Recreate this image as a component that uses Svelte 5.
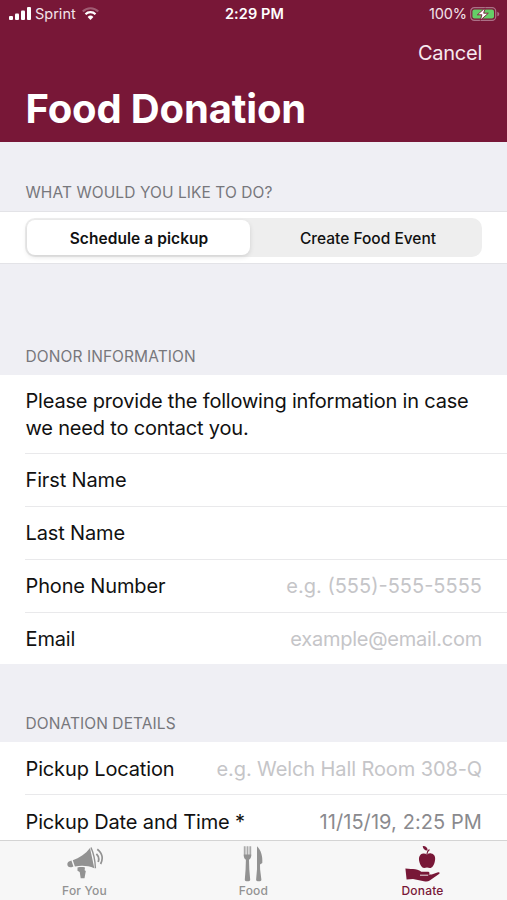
<script>
	let action = 'pickup'
	let tab = 'donate'

	const actions = [
		{ id: 'pickup', label: 'Schedule a pickup' },
		{ id: 'event', label: 'Create Food Event' }
	]

	const donor = [
		{ label: 'First Name', hint: '' },
		{ label: 'Last Name', hint: '' },
		{ label: 'Phone Number', hint: 'e.g. (555)-555-5555', cls: 'phone' },
		{ label: 'Email', hint: 'example@email.com', cls: 'email' }
	]
</script>

<div class="screen">
	<header>
		<div class="status">
			<div class="carrier">
				<svg width="22" height="13" viewBox="0 0 22 13" fill="#fff">
					<rect x="0" y="9" width="4" height="4" rx="1" />
					<rect x="6" y="6.5" width="4" height="6.5" rx="1" />
					<rect x="12" y="3.5" width="4" height="9.5" rx="1" />
					<rect x="18" y="0" width="4" height="13" rx="1" />
				</svg>
				<span>Sprint</span>
				<svg width="17" height="13" viewBox="0 0 17 13" fill="none" stroke="#fff" stroke-width="2.2">
					<path d="M.8 4.5a10.8 10.8 0 0 1 15.4 0" opacity=".3" />
					<path d="M3.5 7.3a7 7 0 0 1 10 0" />
					<path d="M8.5 13 5.6 10a4.1 4.1 0 0 1 5.8 0z" fill="#fff" stroke="none" />
				</svg>
			</div>
			<div class="time">2:29 PM</div>
			<div class="power">
				<span>100%</span>
				<svg width="30" height="14" viewBox="0 0 30 14">
					<rect x=".7" y=".7" width="25" height="12.6" rx="3.6" fill="none" stroke="#ac7187" stroke-width="1.2" />
					<path d="M27.3 4.7c2.6.8 2.6 3.8 0 4.6z" fill="#ac7187" />
					<rect x="2.4" y="2.4" width="21.6" height="9.2" rx="2" fill="#65cf67" />
					<path d="M15.2 .8 7.4 7.8h4.5l-1.6 5.5 8-7.1h-4.6z" fill="#fff" stroke="#781737" stroke-width=".9" />
				</svg>
			</div>
		</div>
		<button class="cancel">Cancel</button>
		<h1>Food Donation</h1>
	</header>

	<main>
		<h2 class="first">WHAT WOULD YOU LIKE TO DO?</h2>
		<section class="choice">
			<div class="segments">
				{#each actions as a}
					<button class:on={action === a.id} on:click={() => (action = a.id)}>{a.label}</button>
				{/each}
			</div>
		</section>

		<h2 class="donor">DONOR INFORMATION</h2>
		<section>
			<p>Please provide the following information in case<br />we need to contact you.</p>
			{#each donor as field}
				<div class="row">
					<span class="label">{field.label}</span>
					<span class="hint {field.cls || ''}">{field.hint}</span>
				</div>
			{/each}
		</section>

		<h2 class="details">DONATION DETAILS</h2>
		<section>
			<div class="row top">
				<span class="label">Pickup Location</span>
				<span class="hint place">e.g. Welch Hall Room 308-Q</span>
			</div>
			<div class="row date">
				<span class="label">Pickup Date and Time *</span>
				<span class="hint value">11/15/19, 2:25 PM</span>
			</div>
		</section>
	</main>

	<nav>
		<button class:active={tab === 'you'} on:click={() => (tab = 'you')}>
			<svg width="38" height="34" viewBox="0 0 38 34" fill="currentColor">
				<path d="M3.5 15.2 5.4 14.6l2 6-2 .6c-4 .9-5.8-4.3-1.9-6z" />
				<path d="M6.8 14.3C13.2 12 19.5 8 24 2L28.3 22.3c-6.5-2.7-12.5-3-19.4-1.8z" />
				<path d="M25 1.5c2.7 6 4.2 13.4 4.4 20.7" fill="none" stroke="currentColor" stroke-width="1.4" />
				<path d="M11.5 21.5c2.6-.5 5-.5 7.5-.1l-.4 2.9 1.2.6-1.3 7.4h-3.8l-1-6.4-2.2-1.1z" />
				<path d="M30.4 7.8c2.3 2.3 2.9 5.3 1.8 8.2M31.3 3.2c5.3 4 5.9 9.8 3.3 14.8" fill="none" stroke="currentColor" stroke-width="1.8" />
			</svg>
			<span>For You</span>
		</button>
		<button class="food" class:active={tab === 'food'} on:click={() => (tab = 'food')}>
			<svg width="22" height="36" viewBox="0 0 22 36">
				<g fill="none" stroke="#aaa" stroke-width="1.8">
					<path d="M1.7.3v10M4.5.3v10M7.3.3v10" />
				</g>
				<path d="M.8 8.5h7.4c.1 3.2-.8 4.4-2.2 5.2l.3 9.6.9 10.5c.1 2-5.5 2-5.4 0l.8-10.5.3-9.6C1.5 12.9.7 11.5.8 8.5z" fill="currentColor" />
				<path d="M14 .3c3.9 3.5 5.9 10.2 5.3 16.6L17 18.5l.1 4.8 1.3 10.5c.2 2-5.4 2-5.3 0l.9-10.5z" fill="currentColor" />
			</svg>
			<span>Food</span>
		</button>
		<button class:active={tab === 'donate'} on:click={() => (tab = 'donate')}>
			<svg width="36" height="36" viewBox="1 0 36 36" fill="currentColor">
				<path d="M23 8.4c1.2-.8 2.5-1.2 4.1-1 3.8.5 4.8 4.3 3.7 8-.9 3.9-2.7 6.6-5 6.5-1 0-1.8-.5-2.8-.5s-1.9.5-2.9.5c-2.2 0-4-3.1-4.8-6.5-.9-4 .3-7.6 4-8 1.5-.1 2.7.3 3.7 1z" />
				<path d="M18.7 0c3-.1 4.8 1.5 5 4.5-2.7.3-4.7-1.3-5-4.5z" />
				<path d="M22.9 8.2c0-2 .6-3.4 2.5-4.8" fill="none" stroke="currentColor" stroke-width="1.2" />
				<path d="M1.4 22.4 7 23.1c4-.5 7.2.4 10.3 2.7h6.4c2 0 2.6 2.2.7 2.8h3.3l6.4-2.3c1.5-.4 2.1.8.9 1.7l-9.3 6.4c-1.4 1-2.8 1.2-4.5 1L9 32.9l-6.4.7z" />
				<path d="M16 29.2h8.2" stroke="#f7f7f7" stroke-width=".9" />
			</svg>
			<span>Donate</span>
		</button>
	</nav>
</div>

<style>
	:global(body) {
		margin: 0;
	}
	.screen {
		height: 900px;
		display: flex;
		flex-direction: column;
		overflow: hidden;
		background: #efeff4;
		color: #111;
		font-family: Inter, "Liberation Sans", sans-serif;
	}
	button {
		padding: 0;
		border: 0;
		background: none;
		font-family: inherit;
		color: inherit;
	}
	header {
		height: 142px;
		flex: none;
		box-sizing: border-box;
		display: flex;
		flex-direction: column;
		background: #781737;
		color: #fff;
	}
	.status {
		height: 27px;
		padding: 0 7px 0 9px;
		display: grid;
		grid-template-columns: 1fr auto 1fr;
		align-items: center;
		font-size: 14.5px;
	}
	.carrier, .power {
		display: flex;
		align-items: center;
		gap: 4px;
		color: #f3e4ea;
	}
	.carrier svg:last-child {
		margin-left: 2px;
	}
	.power {
		justify-content: flex-end;
		gap: 3px;
		letter-spacing: -.1px;
	}
	.time {
		font-weight: 600;
		letter-spacing: .1px;
	}
	.cancel {
		align-self: flex-end;
		height: 50px;
		margin: 1px 25px 0 0;
		font-size: 20px;
		letter-spacing: -.25px;
		color: #f7e9ef;
	}
	h1 {
		margin: 6px 0 0 25.5px;
		font-size: 40px;
		line-height: 50px;
		font-weight: 700;
		letter-spacing: -.15px;
	}
	main {
		flex: 1;
		min-height: 0;
		overflow: hidden;
	}
	h2 {
		margin: 0;
		padding: 0 25.5px 8px;
		box-sizing: border-box;
		display: flex;
		align-items: flex-end;
		font-size: 15.5px;
		line-height: 20px;
		font-weight: 400;
		letter-spacing: .08px;
		color: #77777c;
	}
	.first { height: 69px; }
	.donor { height: 111px; }
	.details { height: 78px; }
	section {
		background: #fff;
	}
	.choice {
		height: 53px;
		padding: 6px 25px;
		box-sizing: border-box;
		border-top: 1px solid #e3e3e7;
		border-bottom: 1px solid #e3e3e7;
	}
	.segments {
		height: 39px;
		padding: 2px;
		box-sizing: border-box;
		display: grid;
		grid-template-columns: 223px 1fr;
		border-radius: 10px;
		background: #eee;
	}
	.segments button {
		padding: 1px 0 0 6px;
		border-radius: 8px;
		font-size: 15.5px;
		font-weight: 500;
	}
	.segments .on {
		padding: 1px 0 0 1px;
		background: #fff;
		font-weight: 600;
		letter-spacing: .06px;
		box-shadow: 0 2px 5px rgba(0, 0, 0, .12);
	}
	p {
		height: 78px;
		margin: 0;
		padding: 13px 0 0 25.5px;
		box-sizing: border-box;
		font-size: 20px;
		line-height: 27px;
		letter-spacing: -.19px;
	}
	.row {
		height: 53px;
		margin-left: 25px;
		padding: 0 25px 0 .5px;
		box-sizing: border-box;
		display: flex;
		align-items: center;
		justify-content: space-between;
		border-top: 1px solid #e9e9eb;
		font-size: 20px;
		white-space: nowrap;
	}
	.row:last-child {
		height: 52px;
	}
	.row.top {
		height: 52px;
		border-top-color: transparent;
	}
	.row.date {
		height: 54px;
	}
	.label { letter-spacing: -.14px; }
	.hint { color: #c5c5c8; }
	.email { letter-spacing: -.24px; }
	.place { letter-spacing: -.1px; }
	.value { color: #8a8a8e; letter-spacing: .08px; }
	nav {
		height: 60px;
		flex: none;
		box-sizing: border-box;
		display: grid;
		grid-template-columns: repeat(3, 1fr);
		border-top: 1px solid #d4d4d4;
		background: #f7f7f7;
	}
	nav button {
		display: flex;
		flex-direction: column;
		align-items: center;
		justify-content: space-between;
		padding: 5px 0 1px;
		color: #929292;
		font-size: 12px;
		font-weight: 500;
		line-height: 16px;
		letter-spacing: .2px;
	}
	nav .active {
		color: #781737;
	}
</style>
